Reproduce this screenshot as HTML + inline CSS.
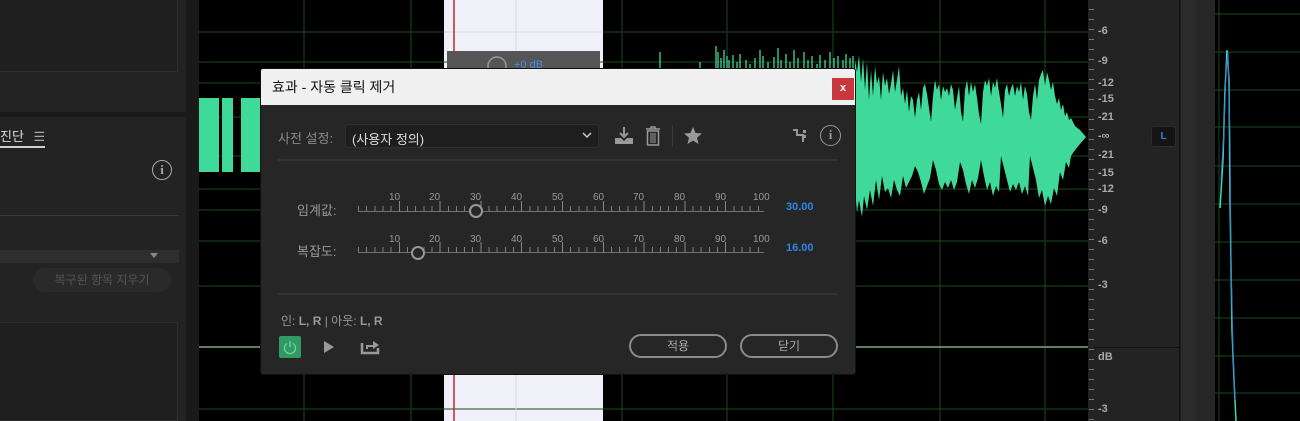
<!DOCTYPE html>
<html><head><meta charset="utf-8"><style>
*{margin:0;padding:0;box-sizing:border-box}
body{width:1300px;height:421px;background:#1d1d1d;position:relative;overflow:hidden;font-family:"Liberation Sans","Noto Sans CJK KR",sans-serif;color:#b8b8b8}
.a{position:absolute}
.lbl{font-size:11px;color:#aaa;position:absolute;font-weight:bold}
</style></head><body>
<!-- left panel -->
<div class="a" style="left:0;top:0;width:186px;height:421px;background:#232323"></div>
<div class="a" style="left:0;top:0;width:178px;height:72px;border:1px solid #2e2e2e;border-left:none;border-top:none;background:#1f1f1f"></div>
<div class="a" style="left:0;top:112px;width:186px;height:5px;background:#1a1a1a"></div>
<div class="a" style="left:0;top:126px;font-size:13px;color:#ddd">진단 <span style="margin-left:6px;color:#aaa">☰</span></div>
<div class="a" style="left:0;top:146px;width:45px;height:2px;background:#d0d0d0"></div>
<div class="a" style="left:152px;top:160px;width:20px;height:20px;border:1.5px solid #aaa;border-radius:50%;font:bold 13px 'Liberation Serif',serif;color:#aaa;text-align:center;line-height:17px">i</div>
<div class="a" style="left:0;top:215px;width:179px;height:1px;background:#3a3a3a"></div>
<div class="a" style="left:0;top:250px;width:179px;height:13px;background:#2e2e2e"></div>
<div class="a" style="left:150px;top:253px;width:0;height:0;border-left:4px solid transparent;border-right:4px solid transparent;border-top:5px solid #888"></div>
<div class="a" style="left:33px;top:268px;width:138px;height:24px;border-radius:12px;background:#2a2a2a;font-size:12px;color:#555;text-align:center;line-height:24px">복구된 항목 지우기</div>
<div class="a" style="left:0;top:322px;width:178px;height:99px;background:#1f1f1f;border:1px solid #2e2e2e;border-left:none"></div>
<div class="a" style="left:186px;top:0;width:13px;height:421px;background:#1a1a1a"></div>

<!-- waveform area -->
<svg class="a" style="left:199px;top:0" width="889" height="421" viewBox="199 0 889 421">
<rect x="199" y="0" width="889" height="421" fill="#000"/>
<rect x="444" y="0" width="159" height="421" fill="#f0f0f8"/>
<g stroke="#174a17" stroke-width="1">
<line x1="304" y1="0" x2="304" y2="421"/><line x1="411" y1="0" x2="411" y2="421"/>
<line x1="622" y1="0" x2="622" y2="421"/><line x1="727" y1="0" x2="727" y2="421"/>
<line x1="833" y1="0" x2="833" y2="421"/><line x1="940" y1="0" x2="940" y2="421"/><line x1="1045" y1="0" x2="1045" y2="421"/>
<line x1="199" y1="32" x2="1088" y2="32"/><line x1="199" y1="62" x2="1088" y2="62"/><line x1="199" y1="83" x2="1088" y2="83"/>
<line x1="199" y1="117" x2="1088" y2="117"/><line x1="199" y1="156" x2="1088" y2="156"/><line x1="199" y1="189" x2="1088" y2="189"/>
<line x1="199" y1="210" x2="1088" y2="210"/><line x1="199" y1="241" x2="1088" y2="241"/><line x1="199" y1="286" x2="1088" y2="286"/>
<line x1="199" y1="409" x2="1088" y2="409"/>
</g>
<g stroke="#d8d8e0"><line x1="516" y1="0" x2="516" y2="421"/><line x1="444" y1="32" x2="603" y2="32"/></g>
<line x1="199" y1="347" x2="1088" y2="347" stroke="#7faa80" stroke-width="1.5"/>
<line x1="454" y1="0" x2="454" y2="421" stroke="#c0282d" stroke-width="1.5"/>
<g fill="#3fd99a">
<rect x="199" y="98" width="20" height="74"/><rect x="222" y="98" width="11" height="74"/><rect x="241" y="98" width="20" height="74"/>
<path d="M855,137 L855,60 857,72 859,55 861,82 863,58 865,90 867,62 869,100 871,70 873,96 875,66 877,84 879,76 881,100 883,72 885,86 887,78 889,94 891,84 893,70 895,92 897,80 899,66 901,96 903,88 905,104 907,90 909,112 911,96 913,100 915,118 917,100 919,92 921,110 923,88 925,84 927,94 929,108 931,122 933,96 935,80 937,90 939,84 941,100 943,86 945,92 947,88 949,96 951,84 953,90 955,110 957,98 959,86 961,112 963,122 965,90 967,80 969,96 971,82 973,92 975,84 977,98 979,114 981,124 983,92 985,80 987,86 989,78 991,96 993,82 995,88 997,78 999,92 1001,104 1003,118 1005,90 1007,84 1009,96 1011,88 1013,84 1015,96 1017,86 1019,92 1021,82 1023,100 1025,86 1027,94 1029,112 1031,120 1033,96 1035,84 1037,100 1039,80 1041,74 1043,70 1045,86 1047,72 1049,80 1051,90 1053,82 1055,96 1057,104 1059,98 1061,110 1063,104 1065,116 1067,112 1069,120 1071,118 1075,126 1080,130 1086,137 1080,144 1075,150 1071,156 1069,168 1066,162 1063,180 1060,172 1057,196 1054,188 1051,204 1048,196 1045,206 1042,190 1039,198 1036,180 1033,168 1030,156 1028,196 1025,186 1022,194 1019,182 1016,190 1013,184 1010,192 1007,180 1004,168 1001,156 999,192 996,186 993,196 990,182 987,190 984,176 981,160 978,178 975,188 972,180 969,194 966,184 963,170 960,162 957,182 954,190 951,180 948,188 945,182 942,190 939,184 936,170 933,160 930,178 927,186 924,194 921,182 918,172 915,166 912,176 909,182 906,188 903,176 900,196 897,190 894,180 891,198 888,188 885,192 882,176 879,200 876,180 873,206 870,190 867,210 864,196 862,217 859,200 857,212 855,190 Z"/>
</g>
<g stroke="#3fd99a" stroke-width="1.3">
<line x1="660" y1="52" x2="660" y2="68"/><line x1="700" y1="62" x2="700" y2="68"/>
<line x1="716" y1="46" x2="716" y2="68"/><line x1="718" y1="52" x2="718" y2="68"/><line x1="721" y1="58" x2="721" y2="68"/>
<line x1="724" y1="50" x2="724" y2="68"/><line x1="727" y1="56" x2="727" y2="68"/><line x1="729" y1="60" x2="729" y2="68"/>
<line x1="733" y1="55" x2="733" y2="68"/><line x1="737" y1="62" x2="737" y2="68"/><line x1="740" y1="54" x2="740" y2="68"/>
<line x1="746" y1="60" x2="746" y2="68"/><line x1="750" y1="64" x2="750" y2="68"/><line x1="755" y1="58" x2="755" y2="68"/>
<line x1="760" y1="50" x2="760" y2="68"/><line x1="763" y1="56" x2="763" y2="68"/><line x1="768" y1="62" x2="768" y2="68"/>
<line x1="774" y1="57" x2="774" y2="68"/><line x1="778" y1="48" x2="778" y2="68"/><line x1="781" y1="60" x2="781" y2="68"/>
<line x1="786" y1="54" x2="786" y2="68"/><line x1="790" y1="62" x2="790" y2="68"/><line x1="794" y1="50" x2="794" y2="68"/>
<line x1="798" y1="58" x2="798" y2="68"/><line x1="804" y1="52" x2="804" y2="68"/><line x1="808" y1="60" x2="808" y2="68"/>
<line x1="812" y1="56" x2="812" y2="68"/><line x1="817" y1="64" x2="817" y2="68"/><line x1="820" y1="55" x2="820" y2="68"/>
<line x1="825" y1="60" x2="825" y2="68"/><line x1="830" y1="52" x2="830" y2="68"/><line x1="834" y1="58" x2="834" y2="68"/>
<line x1="838" y1="56" x2="838" y2="68"/><line x1="843" y1="60" x2="843" y2="68"/><line x1="846" y1="54" x2="846" y2="68"/>
<line x1="850" y1="58" x2="850" y2="68"/><line x1="853" y1="56" x2="853" y2="68"/>
</g>
<rect x="447" y="51" width="153" height="17" fill="#555"/>
<circle cx="497" cy="66" r="9" fill="none" stroke="#999" stroke-width="1.5"/>
<text x="514" y="68" font-size="11" fill="#4a8ee0" font-family="Liberation Sans">+0 dB</text>
</svg>

<!-- ruler -->
<div class="a" style="left:1088px;top:0;width:92px;height:421px;background:#232323;border-right:1px solid #111"></div>
<div class="a" style="left:1088px;top:347px;width:92px;height:1px;background:#111"></div>
<div class="a" style="left:1089px;top:0;width:5px;height:421px;background:repeating-linear-gradient(#232323 0 9px,#777 9px 10px)"></div>
<div class="lbl" style="left:1098px;top:25px">-6</div>
<div class="lbl" style="left:1098px;top:55px">-9</div>
<div class="lbl" style="left:1098px;top:77px">-12</div>
<div class="lbl" style="left:1098px;top:93px">-15</div>
<div class="lbl" style="left:1098px;top:111px">-21</div>
<div class="lbl" style="left:1098px;top:130px">-∞</div>
<div class="lbl" style="left:1098px;top:149px">-21</div>
<div class="lbl" style="left:1098px;top:167px">-15</div>
<div class="lbl" style="left:1098px;top:183px">-12</div>
<div class="lbl" style="left:1098px;top:204px">-9</div>
<div class="lbl" style="left:1098px;top:235px">-6</div>
<div class="lbl" style="left:1098px;top:279px">-3</div>
<div class="lbl" style="left:1098px;top:351px">dB</div>
<div class="lbl" style="left:1098px;top:403px">-3</div>
<div class="a" style="left:1151px;top:126px;width:25px;height:21px;background:#141414;border:1px solid #2c2c2c;border-radius:3px;color:#3b7ed8;font-size:10px;font-weight:bold;text-align:center;line-height:19px">L</div>
<div class="a" style="left:1181px;top:0;width:14px;height:421px;background:#2b2b2b"></div>
<div class="a" style="left:1195px;top:0;width:20px;height:421px;background:#262626"></div>
<svg class="a" style="left:1215px;top:0" width="85" height="421">
<rect width="85" height="421" fill="#000"/>
<g stroke="#174a17"><line x1="4" y1="0" x2="4" y2="421"/>
<line x1="0" y1="14" x2="85" y2="14"/><line x1="0" y1="52" x2="85" y2="52"/><line x1="0" y1="90" x2="85" y2="90"/><line x1="0" y1="127" x2="85" y2="127"/><line x1="0" y1="166" x2="85" y2="166"/><line x1="0" y1="204" x2="85" y2="204"/><line x1="0" y1="242" x2="85" y2="242"/><line x1="0" y1="280" x2="85" y2="280"/><line x1="0" y1="318" x2="85" y2="318"/><line x1="0" y1="356" x2="85" y2="356"/><line x1="0" y1="393" x2="85" y2="393"/></g>
<path d="M5,208 L8,160 10,90 12,50 14,80 15,200 17,330 19,380 21,421" fill="none" stroke="#3fd9b0" stroke-width="1.5"/>
<path d="M6,180 L9,130 11,70 13,52 15,140 16,260 18,350 20,400" fill="none" stroke="#3b7ed8" stroke-width="1"/>
</svg>

<!-- dialog -->
<div class="a" style="left:260px;top:68px;width:596px;height:307px;background:#262626;border:1px solid #111;border-radius:3px;overflow:hidden">
 <div class="a" style="left:0;top:0;width:596px;height:36px;background:#f0f0f0"></div>
 <div class="a" style="left:11px;top:8px;font-size:14px;color:#111">효과 - 자동 클릭 제거</div>
 <div class="a" style="left:571px;top:9px;width:22px;height:22px;background:#c8373c;color:#fff;font-size:11px;font-weight:bold;text-align:center;line-height:21px">x</div>
 <div class="a" style="left:17px;top:59px;font-size:13px;color:#8a8a8a">사전 설정:</div>
 <div class="a" style="left:84px;top:55px;width:254px;height:24px;background:#1e1e1e;border:1px solid #303030;border-radius:2px;font-size:13px;color:#ddd;padding:4px 0 0 6px">(사용자 정의)</div>
 <svg class="a" style="left:320px;top:62px" width="12" height="8"><path d="M2,2 L6,6 L10,2" fill="none" stroke="#ccc" stroke-width="1.5"/></svg>
 <svg class="a" style="left:352px;top:56px" width="22" height="22"><path d="M11,2 V12 M7,8 L11,12 L15,8" stroke="#999" stroke-width="2" fill="none"/><path d="M2,13 H8 L11,16 L14,13 H20 V19 H2 Z" fill="#999"/></svg>
 <svg class="a" style="left:383px;top:56px" width="18" height="22"><path d="M2,4 H16 M7,4 V2 H11 V4" stroke="#999" stroke-width="1.5" fill="none"/><rect x="3.5" y="6" width="11" height="14" fill="none" stroke="#999" stroke-width="1.5"/><path d="M7,8 V18 M9,8 V18 M11,8 V18" stroke="#999"/></svg>
 <div class="a" style="left:411px;top:56px;width:1px;height:22px;background:#3a3a3a"></div>
 <svg class="a" style="left:422px;top:57px" width="20" height="20"><path d="M10,1 L12.6,7 L19,7.5 L14,11.7 L15.6,18 L10,14.6 L4.4,18 L6,11.7 L1,7.5 L7.4,7 Z" fill="#999"/></svg>
 <svg class="a" style="left:530px;top:59px" width="18" height="16"><path d="M2,2 H6 V7 H12 V14" stroke="#999" stroke-width="2" fill="none"/><rect x="12" y="2" width="3" height="3" fill="#999"/><rect x="12" y="7" width="3" height="3" fill="#999"/></svg>
 <div class="a" style="left:559px;top:56px;width:21px;height:21px;border:1.5px solid #999;border-radius:50%;font:bold 13px 'Liberation Serif',serif;color:#999;text-align:center;line-height:18px">i</div>
 <div class="a" style="left:17px;top:90px;width:560px;height:2px;background:#333"></div>

 <div class="a" style="left:36px;top:131px;font-size:13px;color:#999">임계값:</div>
 <div class="a" style="left:36px;top:172px;font-size:13px;color:#999">복잡도:</div>
 <div class="a" style="left:0;top:123px;width:596px;font-size:10px;color:#999">
  <span class="a" style="left:128px">10</span><span class="a" style="left:168px">20</span><span class="a" style="left:209px">30</span><span class="a" style="left:250px">40</span><span class="a" style="left:291px">50</span><span class="a" style="left:332px">60</span><span class="a" style="left:372px">70</span><span class="a" style="left:413px">80</span><span class="a" style="left:454px">90</span><span class="a" style="left:492px">100</span>
 </div>
 <div class="a" style="left:0;top:165px;width:596px;font-size:10px;color:#999">
  <span class="a" style="left:128px">10</span><span class="a" style="left:168px">20</span><span class="a" style="left:209px">30</span><span class="a" style="left:250px">40</span><span class="a" style="left:291px">50</span><span class="a" style="left:332px">60</span><span class="a" style="left:372px">70</span><span class="a" style="left:413px">80</span><span class="a" style="left:454px">90</span><span class="a" style="left:492px">100</span>
 </div>
 <div class="a" style="left:97px;top:137px;width:406px;height:6px;background:repeating-linear-gradient(90deg,#888 0 1px,transparent 1px 8.16px);border-bottom:1px solid #777;opacity:.9"></div>
 <div class="a" style="left:97px;top:132px;width:406px;height:11px;background:repeating-linear-gradient(90deg,#888 0 1px,transparent 1px 40.8px);clip-path:inset(0 0 0 40px)"></div>
 <div class="a" style="left:97px;top:178px;width:406px;height:6px;background:repeating-linear-gradient(90deg,#888 0 1px,transparent 1px 8.16px);border-bottom:1px solid #777;opacity:.9"></div>
 <div class="a" style="left:97px;top:173px;width:406px;height:11px;background:repeating-linear-gradient(90deg,#888 0 1px,transparent 1px 40.8px);clip-path:inset(0 0 0 40px)"></div>
 <div class="a" style="left:208px;top:135px;width:14px;height:14px;border-radius:50%;border:2.5px solid #999;background:#262626"></div>
 <div class="a" style="left:150px;top:177px;width:14px;height:14px;border-radius:50%;border:2.5px solid #999;background:#262626"></div>
 <div class="a" style="left:525px;top:132px;font-size:11px;font-weight:bold;color:#2d86e6">30.00</div>
 <div class="a" style="left:525px;top:173px;font-size:11px;font-weight:bold;color:#2d86e6">16.00</div>

 <div class="a" style="left:17px;top:224px;width:560px;height:2px;background:#333"></div>
 <div class="a" style="left:20px;top:243px;font-size:12px;color:#999">인: <b>L, R</b> | 아웃: <b>L, R</b></div>
 <div class="a" style="left:18px;top:267px;width:22px;height:22px;background:#2f9a63;border-radius:2px"></div>
 <svg class="a" style="left:21px;top:270px" width="16" height="16"><path d="M5,4.5 A5.5,5.5 0 1 0 11,4.5" fill="none" stroke="#7ed0a0" stroke-width="1.3"/><path d="M8,2 V8" stroke="#7ed0a0" stroke-width="1.3"/></svg>
 <svg class="a" style="left:61px;top:271px" width="14" height="14"><path d="M2,1 L12,7 L2,13 Z" fill="#999"/></svg>
 <svg class="a" style="left:99px;top:268px" width="20" height="18"><path d="M2,6 V16 H18 V11" fill="none" stroke="#999" stroke-width="2.5"/><path d="M6,12 V8 H13 V4 L19,8 L13,12 V10 H8 V12 Z" fill="#999"/></svg>
 <div class="a" style="left:368px;top:265px;width:98px;height:24px;border:2px solid #8a8a8a;border-radius:12px;font-size:12px;color:#aaa;text-align:center;line-height:20px">적용</div>
 <div class="a" style="left:479px;top:265px;width:98px;height:24px;border:2px solid #8a8a8a;border-radius:12px;font-size:12px;color:#aaa;text-align:center;line-height:20px">닫기</div>
</div>
</body></html>
